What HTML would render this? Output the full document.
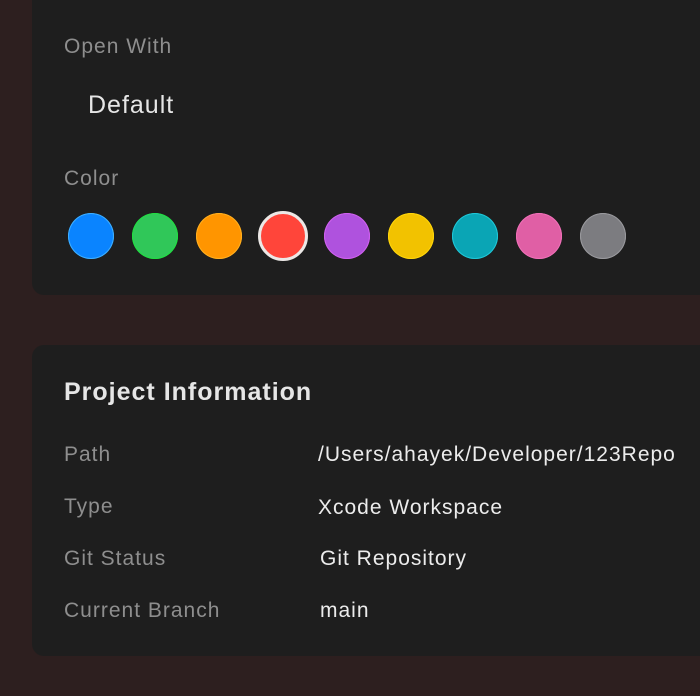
<!DOCTYPE html>
<html><head><style>
body{margin:0;width:700px;height:696px;background:#2d1f1f;font-family:"Liberation Sans",sans-serif;position:relative;overflow:hidden}
.card{position:absolute;left:32px;right:-20px;background:#1e1e1e;border-radius:12px}
.t{position:absolute;white-space:nowrap;letter-spacing:1px}
.lab{color:#8e8e8e;font-size:21px}
.val{color:#ececec;font-size:21px}
.c{position:absolute;top:213px;width:46px;height:46px;border-radius:50%}
</style></head><body>
<div class="card" style="top:-20px;height:315px"></div>
<div class="t lab" style="left:64px;top:35px">Open With</div>
<div class="t" style="left:88px;top:91px;color:#e6e6e6;font-size:25px">Default</div>
<div class="t lab" style="left:64px;top:167px">Color</div>
<div class="c" style="left:68px;background:#0a84ff;box-shadow:inset 0 0 0 1px #3fb0ff"></div>
<div class="c" style="left:132px;background:#30c759;box-shadow:inset 0 0 0 1px #20e040"></div>
<div class="c" style="left:196px;background:#ff9500;box-shadow:inset 0 0 0 1px #ffb020"></div>
<div class="c" style="left:258px;top:211px;width:44px;height:44px;background:#ff453a;border:3px solid #ece8e6"></div>
<div class="c" style="left:324px;background:#af52de;box-shadow:inset 0 0 0 1px #d060f0"></div>
<div class="c" style="left:388px;background:#f2c200;box-shadow:inset 0 0 0 1px #ffd60a"></div>
<div class="c" style="left:452px;background:#0aa5b5;box-shadow:inset 0 0 0 1px #20c8d8"></div>
<div class="c" style="left:516px;background:#e05fa5;box-shadow:inset 0 0 0 1px #f070b8"></div>
<div class="c" style="left:580px;background:#7c7c80;box-shadow:inset 0 0 0 1px #9a9a9e"></div>
<div class="card" style="top:345px;height:311px"></div>
<div class="t" style="left:64px;top:378px;color:#e6e6e6;font-size:25px;font-weight:bold">Project Information</div>
<div class="t lab" style="left:64px;top:443px">Path</div>
<div class="t val" style="left:318px;top:443px">/Users/ahayek/Developer/123Repo</div>
<div class="t lab" style="left:64px;top:495px">Type</div>
<div class="t val" style="left:318px;top:496px">Xcode Workspace</div>
<div class="t lab" style="left:64px;top:547px">Git Status</div>
<div class="t val" style="left:320px;top:547px">Git Repository</div>
<div class="t lab" style="left:64px;top:599px">Current Branch</div>
<div class="t val" style="left:320px;top:599px">main</div>
</body></html>
